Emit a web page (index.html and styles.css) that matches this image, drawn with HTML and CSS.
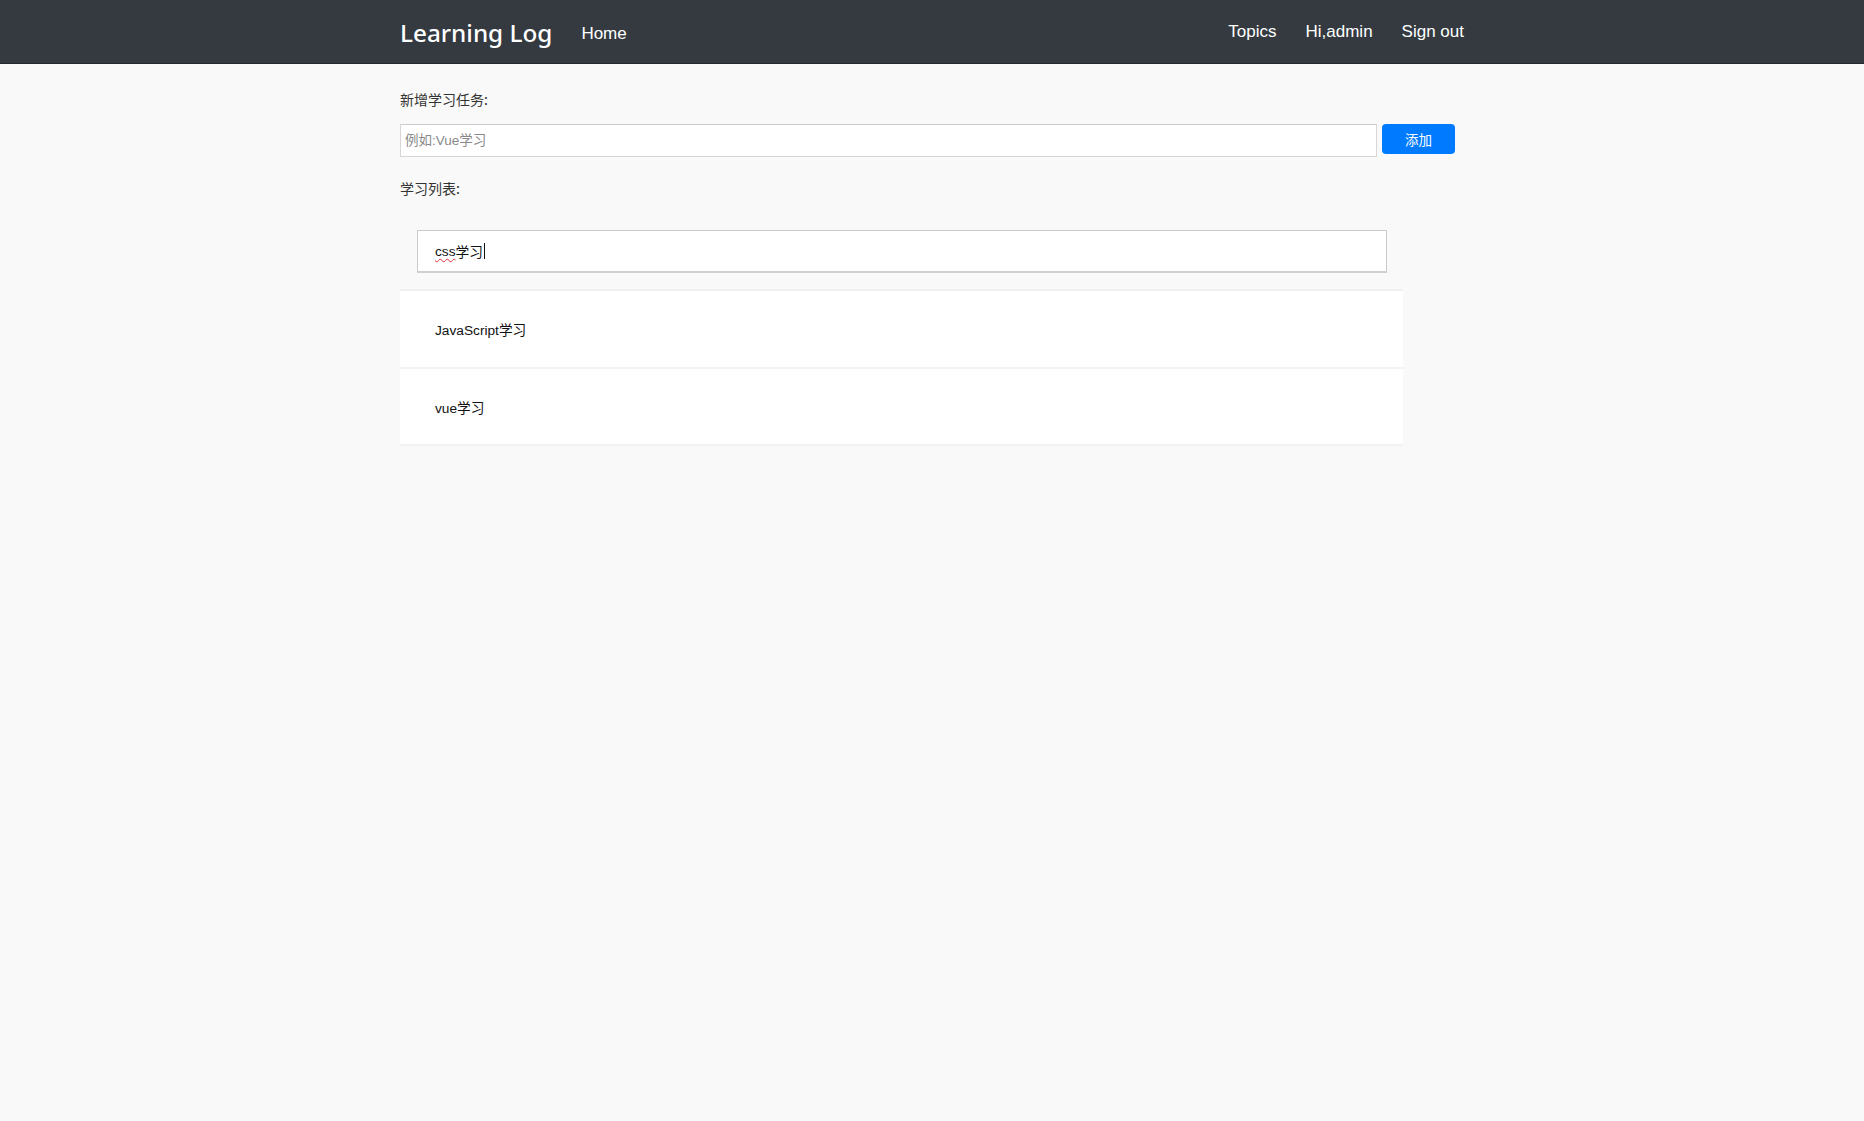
FILE: index.html
```html
<!DOCTYPE html>
<html lang="zh-CN">
<head>
<meta charset="utf-8">
<title>Learning Log</title>
<link rel="stylesheet" href="styles.css">
</head>
<body>
<nav class="navbar">
  <div class="nav-inner">
    <a class="brand" href="#">Learning Log</a>
    <a class="nav-link home" href="#">Home</a>
    <div class="nav-right">
      <a class="nav-link" href="#">Topics</a>
      <span class="nav-link">Hi,admin</span>
      <a class="nav-link" href="#">Sign out</a>
    </div>
  </div>
</nav>
<main class="main">
  <div class="label first">新增学习任务:</div>
  <div class="add-row">
    <input class="add-input" type="text" placeholder="例如:Vue学习">
    <button class="add-btn">添加</button>
  </div>
  <div class="label second">学习列表:</div>
  <ul class="todo-list">
    <li class="todo-item editing">
      <div class="edit-box"><span class="misspelled">css</span>学习<span class="caret"></span></div>
    </li>
    <li class="todo-item">JavaScript学习</li>
    <li class="todo-item last">vue学习</li>
  </ul>
</main>
</body>
</html>
```

FILE: styles.css
```css
* { box-sizing: border-box; }
html, body { margin: 0; padding: 0; }
body {
  background: #f9f9f9;
  font-family: "Liberation Sans", Arial, "Noto Sans CJK SC", sans-serif;
  color: #222;
  min-height: 1121px;
}
a { text-decoration: none; }

.navbar {
  height: 64px;
  background: #343a40;
  border-bottom: 1px solid #25292d;
}
.nav-inner {
  width: 1064px;
  margin: 0 auto;
  height: 100%;
  display: flex;
  align-items: center;
}
.brand {
  color: #fff;
  font-family: "Noto Sans", "Open Sans", sans-serif;
  font-size: 24.3px;
  font-weight: 500;
  margin-right: 29px;
  margin-top: 2px;
}
.nav-link {
  color: #fff;
  font-size: 17px;
  font-family: "Liberation Sans", Arial, sans-serif;
}
.home { margin-top: 5px; }
.nav-right {
  margin-left: auto;
  display: flex;
  gap: 29px;
  margin-top: 1px;
}

.main {
  width: 1064px;
  margin: 0 auto;
}
.label {
  font-size: 14px;
  line-height: 20px;
  color: #333;
  font-family: "Noto Sans CJK SC", sans-serif;
}
.label.first { margin-top: 25px; }
.label.second { margin-top: 21px; }
.add-row {
  display: flex;
  align-items: flex-start;
  gap: 5px;
  margin-top: 15px;
}
.add-input {
  width: 977px;
  height: 33px;
  border: 1px solid #d6d6d6;
  border-top-color: #ccc;
  background: #fff;
  padding: 0 4px;
  font-size: 13.5px;
  font-family: "Liberation Sans", Arial, "Noto Sans CJK SC", sans-serif;
  outline: none;
}
.add-input::placeholder { color: #8a8a8a; }
.add-btn {
  width: 73px;
  height: 30px;
  background: #007bff;
  color: #fff;
  border: none;
  border-radius: 4px;
  font-size: 13.5px;
  font-family: "Noto Sans CJK SC", sans-serif;
  padding: 0;
}

.todo-list {
  list-style: none;
  margin: 15px 0 0 0;
  padding: 0;
  width: 1003px;
}
.todo-item {
  height: 78px;
  background: #fff;
  border-bottom: 2px solid #f2f2f2;
  display: flex;
  align-items: center;
  padding-left: 35px;
  font-size: 13.7px;
  color: #111;
}
.todo-item.last { height: 77px; }
.todo-item.editing {
  height: 78px;
  background: #f9f9f9;
  padding: 0 16px 0 17px;
  align-items: flex-start;
  padding-top: 17px;
  border-bottom-color: #f0f0f0;
}
.edit-box {
  width: 100%;
  height: 43px;
  background: #fff;
  border: 1px solid #cbcbcb;
  border-bottom: 2px solid #d0d0d0;
  display: flex;
  align-items: center;
  padding-left: 17px;
  font-size: 13.7px;
  color: #111;
}
.misspelled {
  text-decoration: underline wavy #e03030;
  text-decoration-thickness: 1px;
  text-underline-offset: 2px;
}
.caret {
  display: inline-block;
  width: 1px;
  height: 16px;
  background: #111;
  margin-left: 1px;
}
```
